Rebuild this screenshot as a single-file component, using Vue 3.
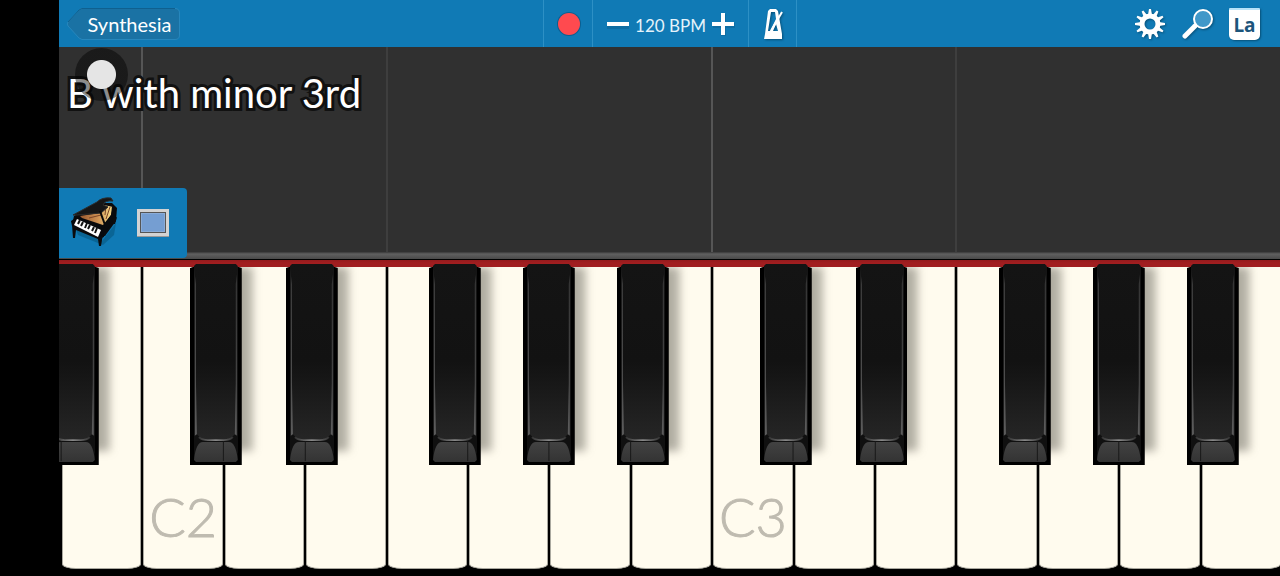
<script setup>
const whiteKeys = Array.from({ length: 15 }, (_, i) => ({
  id: i,
  label: i === 1 ? 'C2' : i === 8 ? 'C3' : '',
}))

const unit = 100 / 15
const blackKeys = [-0.175, 1.588, 2.762, 4.522, 5.68, 6.832, 8.592, 9.762, 11.527, 12.682, 13.832].map((pos) => ({
  left: pos * unit + '%',
  seam: (Math.ceil(pos) - pos) * 81.4,
}))

const guides = [1, 4, 8, 11].map((pos) => ({
  left: pos * unit + '%',
  octave: pos === 1 || pos === 8,
}))

const teeth = Array.from({ length: 12 }, (_, i) => i * 30)
</script>

<template>
  <div class="screen">
    <header class="bar">
      <div class="side">
        <button class="back" type="button">
          <svg class="back-shape" viewBox="0 0 115 34" aria-hidden="true">
            <path d="M16 1.5 H109 Q113.500 1.500 113.500 6 V28 Q113.500 32.500 109 32.500 H16 L13 31 L2 19 Q0.500 17 2 15 L13 3 Z" fill="#1a72a4" stroke="#2787bd" />
            <path d="M2 15 L13 3 L16 1.500 H109" fill="none" stroke="#0f608f" />
          </svg>
          <span class="back-text">Synthesia</span>
        </button>
      </div>
      <div class="transport">
        <button class="cell small" type="button" aria-label="Record">
          <svg class="icon" viewBox="0 0 30 30"><circle cx="15" cy="15" r="12" fill="#0b5f91" /><circle cx="15" cy="15" r="11" fill="#ff4a4f" /></svg>
        </button>
        <div class="cell tempo">
          <button class="step" type="button" aria-label="Slower">
            <svg viewBox="0 0 24 24"><path d="M1 12h22v5H1z" fill="#0b5f91" opacity=".5" /><path d="M1 10h22v4H1z" fill="#fff" /></svg>
          </button>
          <span class="bpm">120 BPM</span>
          <button class="step" type="button" aria-label="Faster">
            <svg viewBox="0 0 24 24"><path d="M10 2h5v9h9v5h-9v8h-5v-8H2v-5h8z" fill="#0b5f91" opacity=".5" /><path d="M10 1h4v9h9v4h-9v9h-4v-9H1v-4h9z" fill="#fff" /></svg>
          </button>
        </div>
        <button class="cell small last" type="button" aria-label="Metronome">
          <svg class="icon shade" viewBox="0 0 30 30">
            <path fill="#fff" fill-rule="evenodd" d="M6 30 L7 25 L10 2 L12 0 H18 L20 2 L24 25 V30 Z M13 3 L10 22 H12 L18 10 L17 3 Z M18 15 L15 22 H20 Z" />
            <path d="M13 22 L24 3" stroke="#fff" stroke-width="2" />
          </svg>
        </button>
      </div>
      <div class="side tools">
        <button class="tool" type="button" aria-label="Settings">
          <svg class="icon shade" viewBox="0 0 30 30">
            <path v-for="a in teeth" :key="a" d="M13 6 L14 0 H16 L17 6 Z" fill="#fff" :transform="`rotate(${a} 15 15)`" />
            <circle cx="15" cy="15" r="8" fill="none" stroke="#fff" stroke-width="5" />
          </svg>
        </button>
        <button class="tool" type="button" aria-label="Zoom">
          <svg class="icon shade" viewBox="0 0 30 30">
            <path d="M3 27 L13 17" stroke="#fff" stroke-width="5" stroke-linecap="round" />
            <circle cx="21" cy="10" r="9" fill="#4098c9" stroke="#fff" stroke-width="2" />
          </svg>
        </button>
        <button class="tool label" type="button">La</button>
      </div>
    </header>

    <main class="roll">
      <i v-for="g in guides" :key="g.left" class="guide" :class="{ octave: g.octave }" :style="{ left: g.left }"></i>
      <h1 class="chord">B with minor 3rd</h1>
      <span class="touch"></span>
      <section class="instrument">
        <button class="piano" type="button" aria-label="Grand piano">
          <svg viewBox="0 0 50 52">
            <defs>
              <linearGradient id="wood" x1="0" y1="0" x2="1" y2="0">
                <stop offset="0" stop-color="#99592f" /><stop offset=".55" stop-color="#cf9253" /><stop offset="1" stop-color="#f9e08e" />
              </linearGradient>
            </defs>
            <path d="M5 30 L32 44 L46 26 L44 38 L33 48 L8 38 Z" fill="#075780" opacity=".6" />
            <path d="M4 19 L28 6 L42 6 L47 11 L46 24 L35 39 L29 40 L2 28 Z" fill="#0b0b0d" />
            <path d="M10 19 L30 16 L34 8 L43 10 L41 18 L33 28 L12 21 Z" fill="url(#wood)" />
            <path d="M19 21 L31 18 M36 9 L35 18 M40 10 L36 22" stroke="#7b4527" />
            <path d="M3 18 L27 5 Q32 0 41 1 L43 4 Q35 3 33 8 L38 10 L31 16 L7 18 Z" fill="#161616" stroke="#2c2c2c" />
            <path d="M30 14 L35 28" stroke="#090909" stroke-width="2" />
            <path d="M42 9 L46 12 L45 24 L35 35 L34 28 L41 18 Z" fill="#090a0d" />
            <path d="M1 24 L7 20 L34 30 L34 40 L29 42 L2 29 Z" fill="#08090c" />
            <path d="M7 22 L31 33 L28 40 L4 28 Z" fill="#fff" />
            <path d="M10 23 L8 27 M13 25 L11 29 M17 26 L15 31 M20 28 L18 32 M24 30 L22 34 M27 31 L25 36" stroke="#111" stroke-width="2" />
            <path d="M2 28 L29 41 L33 38 L32 43 L31 49 H29 L28 42 L6 33 L5 41 H3 Z M43 22 L47 20 L45 27 H43 Z" fill="#0b0b0d" />
          </svg>
        </button>
        <button class="swatch" type="button" aria-label="Track colour"><span></span></button>
      </section>
    </main>
    <div class="rail"></div>

    <section class="keyboard" aria-label="Keyboard">
      <svg class="defs" aria-hidden="true">
        <defs>
          <linearGradient id="face" x1="0" y1="0" x2="0" y2="1">
            <stop offset="0" stop-color="#141414" /><stop offset=".55" stop-color="#121212" /><stop offset="1" stop-color="#262626" />
          </linearGradient>
          <linearGradient id="edge" x1="0" y1="0" x2="0" y2="1">
            <stop offset="0" stop-color="#383838" /><stop offset="1" stop-color="#5c5c5c" />
          </linearGradient>
          <linearGradient id="cap" x1="0" y1="0" x2="0" y2="1">
            <stop offset="0" stop-color="#424242" /><stop offset="1" stop-color="#333" />
          </linearGradient>
          <linearGradient id="shine" x1="0" y1="0" x2="1" y2="0">
            <stop offset="0" stop-color="#333" /><stop offset=".5" stop-color="#888" /><stop offset="1" stop-color="#333" />
          </linearGradient>
        </defs>
      </svg>
      <div class="keys">
        <div v-for="k in whiteKeys" :key="k.id" class="white"><span>{{ k.label }}</span></div>
        <div v-for="b in blackKeys" :key="b.left" class="black" :style="{ left: b.left }">
          <svg viewBox="0 0 52 202" preserveAspectRatio="none">
            <path d="M0 4 L3 3 H49 L52 4 V202 H0 Z" fill="#000" />
            <path d="M4 3 H48 V190 H4 Z" fill="#1c1c1c" />
            <path d="M5 3 H47 V176 H5 Z" fill="url(#edge)" />
            <path d="M4 2 L6 0 H46 L48 2 V4 L46 20 V120 L45 172 L39 178 H13 L7 172 L6 120 V20 L4 4 Z" fill="url(#face)" />
            <path d="M4 197 V173 L7 171 L12 176 H40 L45 171 L48 173 V197 Z" fill="#101010" />
            <path d="M9 174 Q12 177 18 177 H34 Q40 177 43 174" fill="none" stroke="url(#shine)" stroke-width="2" />
            <path d="M4 197 Q6 179 13 179 H39 Q46 179 48 197 L46 199 H6 Z" fill="url(#cap)" />
            <path :d="`M${b.seam} 178 V198`" stroke="#181818" />
          </svg>
        </div>
      </div>
    </section>
  </div>
</template>

<style>
body {
  margin: 0;
  background: #000;
}
</style>

<style scoped>
.screen {
  box-sizing: border-box;
  display: flex;
  flex-direction: column;
  min-height: 100vh;
  padding-left: 59px;
  overflow: hidden;
  background: #000;
  font-family: Lato, "Liberation Sans", sans-serif;
}
button {
  display: block;
  margin: 0;
  padding: 0;
  border: 0;
  background: none;
  color: #fff;
  font-family: inherit;
}
svg {
  display: block;
}
.bar {
  display: grid;
  grid-template-columns: 1fr auto 1fr;
  height: 47px;
  background: #107ab5;
}
.side {
  display: flex;
  align-items: center;
  padding-left: 7px;
}
.back {
  display: grid;
  align-items: center;
  width: 115px;
  height: 34px;
}
.back-shape,
.back-text {
  grid-area: 1 / 1;
}
.back-text {
  padding-left: 12px;
  font-size: 20px;
  line-height: 32px;
  text-align: center;
}
.transport {
  display: flex;
}
.cell {
  box-sizing: border-box;
  display: flex;
  align-items: center;
  justify-content: center;
  border-left: 1px solid #2d90c5;
}
.small {
  width: 49px;
  padding-left: 2px;
}
.last {
  border-right: 1px solid #2d90c5;
}
.icon {
  width: 30px;
  height: 30px;
}
.shade {
  overflow: visible;
  filter: drop-shadow(1px 1px 1px #075078);
}
.tempo {
  justify-content: space-between;
  width: 156px;
  padding: 0 12px 0 13px;
}
.step svg {
  width: 24px;
  height: 24px;
}
.bpm {
  padding-top: 4px;
  color: #e4f3fb;
  font-size: 17px;
  line-height: 24px;
  white-space: nowrap;
}
.tools {
  justify-content: flex-end;
  gap: 17px;
  padding-right: 20px;
}
.label {
  width: 31px;
  height: 32px;
  border-top: 2px solid #b8e2f8;
  border-radius: 1px 1px 5px 5px;
  background: #fff;
  box-shadow: 1px 1px 2px #075078;
  color: #1c557b;
  font-family: "Open Sans", sans-serif;
  font-size: 19px;
  font-weight: 700;
  line-height: 30px;
}
.roll {
  position: relative;
  flex: 1;
  min-height: 205px;
  background: #303030;
}
.guide {
  position: absolute;
  top: 0;
  bottom: 0;
  width: 2px;
  margin-left: 1px;
  background: #3e3e3e;
}
.octave {
  background: #565656;
}
.chord {
  position: relative;
  margin: 0;
  padding: 22px 0 0 8px;
  color: #fff;
  font-size: 40px;
  font-weight: 400;
  line-height: 48px;
  -webkit-text-stroke: 6px #111;
  stroke-linejoin: round;
  paint-order: stroke fill;
}
.touch {
  position: absolute;
  top: 1px;
  left: 16px;
  width: 53px;
  height: 53px;
  border-radius: 50%;
  background: radial-gradient(circle, #e5e5e5 14px, rgba(0, 0, 0, 0.45) 15px);
}
.instrument {
  position: absolute;
  bottom: -6px;
  left: 0;
  z-index: 1;
  box-sizing: border-box;
  display: flex;
  align-items: center;
  gap: 17px;
  width: 128px;
  height: 70px;
  padding-left: 11px;
  border-radius: 0 4px 4px 0;
  background: #107ab5;
}
.piano svg {
  width: 50px;
  height: 52px;
}
.swatch {
  box-sizing: border-box;
  width: 32px;
  height: 28px;
  padding: 3px;
  background: #d3d3d3;
  border-bottom: 1px solid #999;
}
.swatch span {
  box-sizing: border-box;
  display: block;
  height: 21px;
  border: 1px solid #555;
  background: #759ed2;
  box-shadow: inset 0 0 0 1px #8aacd8;
}
.rail {
  height: 7px;
  border-bottom: 1px solid #000;
  background: linear-gradient(#383838, #606060 2px, #494949);
}
.keyboard {
  position: relative;
  box-sizing: border-box;
  height: 316px;
  overflow: hidden;
  border-bottom: 7px solid #000;
  background: linear-gradient(#951b1d, #a11e20 3px, #a11e20 7px, #000 7px);
}
.defs {
  position: absolute;
  width: 0;
  height: 0;
}
.keys {
  position: relative;
  display: flex;
  height: 302px;
  margin: 7px -2px 0 2px;
}
.white {
  box-sizing: border-box;
  display: flex;
  flex: 1;
  min-width: 0;
  align-items: flex-end;
  justify-content: center;
  margin: 0 1px 0 1px;
  border-right: 1px solid #aaa89f;
  border-left: 1px solid #aaa89f;
  border-bottom: 1px solid #aaa89f;
  border-radius: 0 0 14px 14px / 0 0 5px 5px;
  background: #fffbee;
}
.white span {
  padding-bottom: 17px;
  color: #bfbbb0;
  font-size: 54px;
  font-weight: 300;
  line-height: 68px;
  -webkit-text-stroke: 1px #bfbbb0;
}
.black {
  position: absolute;
  top: -3px;
  width: 4.24%;
  height: 201px;
}
.black::before {
  position: absolute;
  top: 3px;
  right: -11px;
  bottom: 14px;
  width: 24px;
  background: linear-gradient(90deg, rgba(90, 88, 78, 0.6), rgba(90, 88, 78, 0.4));
  clip-path: inset(0 -20px -20px 0);
  content: "";
  filter: blur(4px);
}
.black svg {
  position: relative;
  width: 100%;
  height: 100%;
}
</style>
